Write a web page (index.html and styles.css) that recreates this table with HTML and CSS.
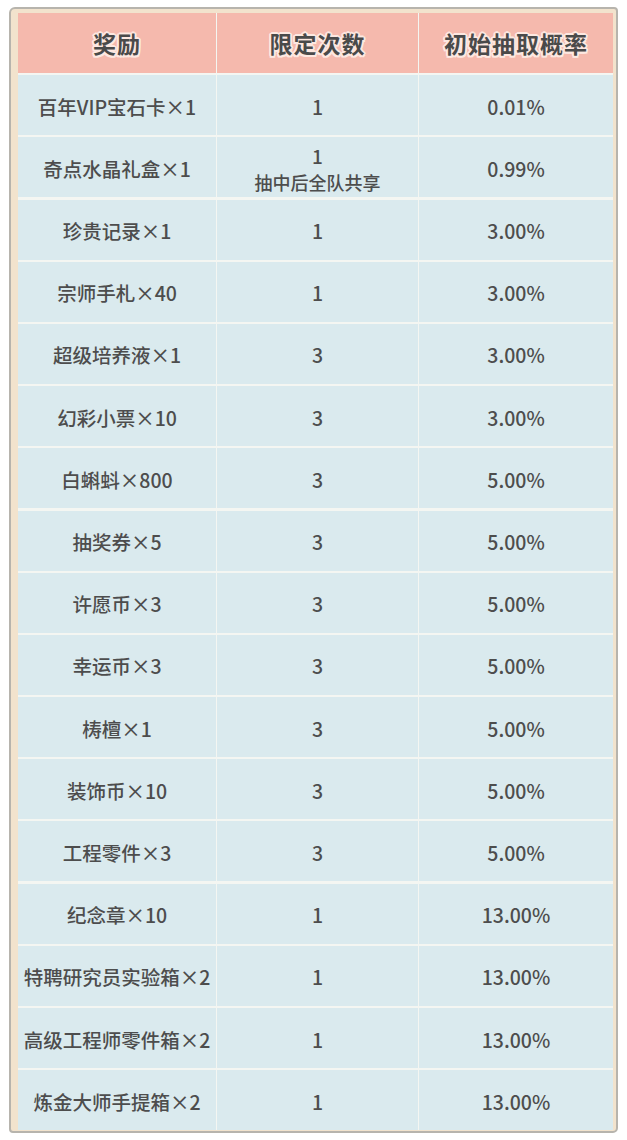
FILE: index.html
```html
<!DOCTYPE html>
<html lang="zh-CN">
<head>
<meta charset="utf-8">
<title>奖励概率</title>
<link rel="stylesheet" href="styles.css">
</head>
<body>
<div class="frame">
  <div class="paper">
    <div class="table">
      <div class="cell head">奖励</div>
      <div class="cell head">限定次数</div>
      <div class="cell head">初始抽取概率</div>

      <div class="cell">百年VIP宝石卡×1</div><div class="cell">1</div><div class="cell">0.01%</div>
      <div class="cell">奇点水晶礼盒×1</div><div class="cell multi"><span class="top">1</span><span class="note">抽中后全队共享</span></div><div class="cell">0.99%</div>
      <div class="cell">珍贵记录×1</div><div class="cell">1</div><div class="cell">3.00%</div>
      <div class="cell">宗师手札×40</div><div class="cell">1</div><div class="cell">3.00%</div>
      <div class="cell">超级培养液×1</div><div class="cell">3</div><div class="cell">3.00%</div>
      <div class="cell">幻彩小票×10</div><div class="cell">3</div><div class="cell">3.00%</div>
      <div class="cell">白蝌蚪×800</div><div class="cell">3</div><div class="cell">5.00%</div>
      <div class="cell">抽奖券×5</div><div class="cell">3</div><div class="cell">5.00%</div>
      <div class="cell">许愿币×3</div><div class="cell">3</div><div class="cell">5.00%</div>
      <div class="cell">幸运币×3</div><div class="cell">3</div><div class="cell">5.00%</div>
      <div class="cell">梼檀×1</div><div class="cell">3</div><div class="cell">5.00%</div>
      <div class="cell">装饰币×10</div><div class="cell">3</div><div class="cell">5.00%</div>
      <div class="cell">工程零件×3</div><div class="cell">3</div><div class="cell">5.00%</div>
      <div class="cell">纪念章×10</div><div class="cell">1</div><div class="cell">13.00%</div>
      <div class="cell">特聘研究员实验箱×2</div><div class="cell">1</div><div class="cell">13.00%</div>
      <div class="cell">高级工程师零件箱×2</div><div class="cell">1</div><div class="cell">13.00%</div>
      <div class="cell">炼金大师手提箱×2</div><div class="cell">1</div><div class="cell">13.00%</div>
    </div>
  </div>
</div>
</body>
</html>
```

FILE: styles.css
```css
html, body {
  margin: 0;
  padding: 0;
  background: #ffffff;
}

body {
  width: 627px;
  height: 1140px;
  font-family: "Noto Sans CJK SC", "Noto Sans", sans-serif;
  color: #4d4d4d;
}

.frame {
  margin: 7px 0 0 9px;
  width: 609px;
  height: 1126px;
  box-sizing: border-box;
  border: 2px solid #b7b4ad;
  border-radius: 6px 4px 5px 4px;
  background: #f2e3cd;
}

.paper {
  padding: 4px 3px 3px 7px;
}

.table {
  display: grid;
  grid-template-columns: 198px 201px 194px;
  grid-template-rows: 60px repeat(17, 60px);
  column-gap: 1px;
  row-gap: 2.2px;
  background: #f4f6f2;
}

.cell {
  display: flex;
  align-items: center;
  justify-content: center;
  background: #daeaee;
  font-size: 19.5px;
  font-weight: 500;
  white-space: nowrap;
  padding-top: 2px;
}

.head {
  padding-top: 0;
  background: #f5b9ad;
  font-size: 23px;
  font-weight: 700;
  color: #4a4a4a;
  letter-spacing: 1px;
  text-shadow:
    2px 0 0 #fde8e1, -2px 0 0 #fde8e1, 0 2px 0 #fde8e1, 0 -2px 0 #fde8e1,
    1.5px 1.5px 0 #fde8e1, -1.5px 1.5px 0 #fde8e1, 1.5px -1.5px 0 #fde8e1, -1.5px -1.5px 0 #fde8e1;
}

.multi {
  flex-direction: column;
  justify-content: flex-start;
  padding-top: 5px;
}

.top {
  display: block;
  font-size: 19px;
  line-height: 27px;
}

.note {
  display: block;
  font-size: 18px;
  line-height: 27px;
}
```
